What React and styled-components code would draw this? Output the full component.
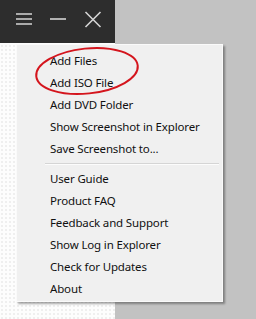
import React from "react";
import styled, { createGlobalStyle } from "styled-components";

const Global = createGlobalStyle`
  html, body {
    margin: 0;
    padding: 0;
    width: 256px;
    height: 319px;
    overflow: hidden;
  }
  body {
    font-family: "Segoe UI", "Noto Sans", sans-serif;
  }
`;

const Screen = styled.div`
  position: relative;
  width: 256px;
  height: 319px;
  display: flex;
  background: #c2c2c2;
`;

const AppPane = styled.div`
  width: 115px;
  display: flex;
  flex-direction: column;
  background-color: #fdfdfd;
  background-image: radial-gradient(#efefef 0.8px, transparent 0.9px);
  background-size: 4px 4px;
`;

const TitleBar = styled.div`
  height: 43px;
  box-sizing: border-box;
  background: #2d2d2d;
  display: flex;
  align-items: flex-start;
  padding: 11px 0 0 15px;
  gap: 16px;
`;

const BarButton = styled.svg`
  width: 18px;
  height: 18px;
  display: block;
  stroke: #d4d4d4;
  stroke-width: 1.6;
  fill: none;
`;

const Menu = styled.div`
  position: absolute;
  left: 16px;
  top: 44px;
  width: 205px;
  padding: 4px 0 2px;
  background: #f0f0f0;
  border: 1px solid #fafafa;
  box-shadow: 2px 2px 2px rgba(0, 0, 0, 0.35);
  display: flex;
  flex-direction: column;
`;

const Item = styled.div`
  height: 22px;
  display: flex;
  align-items: center;
  padding-left: 33px;
  font-size: 11.5px;
  letter-spacing: -0.15px;
  color: #111;
  white-space: nowrap;
`;

const Separator = styled.div`
  height: 8px;
  display: flex;
  align-items: center;
  margin: 0 3px 0 28px;

  &::after {
    content: "";
    flex: 1;
    height: 1px;
    background: #d5d5d5;
    box-shadow: 0 1px 0 #fcfcfc;
  }
`;

const Mark = styled.svg`
  position: absolute;
  left: 33px;
  top: 46px;
  width: 108px;
  height: 50px;
  overflow: visible;
`;

const topItems = [
  "Add Files",
  "Add ISO File",
  "Add DVD Folder",
  "Show Screenshot in Explorer",
  "Save Screenshot to...",
];

const bottomItems = [
  "User Guide",
  "Product FAQ",
  "Feedback and Support",
  "Show Log in Explorer",
  "Check for Updates",
  "About",
];

export default function App() {
  return (
    <Screen>
      <Global />
      <AppPane>
        <TitleBar>
          <BarButton viewBox="0 0 18 18">
            <path d="M1 3h16M1 8h16M1 13h16" />
          </BarButton>
          <BarButton viewBox="0 0 18 18">
            <path d="M1 8h16" />
          </BarButton>
          <BarButton viewBox="0 0 18 18" style={{ marginLeft: 1 }}>
            <path d="M1.5 1l15 15M16.5 1l-15 15" />
          </BarButton>
        </TitleBar>
      </AppPane>

      <Menu>
        {topItems.map((t) => (
          <Item key={t}>{t}</Item>
        ))}
        <Separator />
        {bottomItems.map((t) => (
          <Item key={t}>{t}</Item>
        ))}
      </Menu>

      <Mark viewBox="0 0 108 50">
        <ellipse
          cx="54"
          cy="25"
          rx="51"
          ry="22.5"
          transform="rotate(-6 54 25)"
          fill="none"
          stroke="#d4151d"
          strokeWidth="2"
        />
      </Mark>
    </Screen>
  );
}
